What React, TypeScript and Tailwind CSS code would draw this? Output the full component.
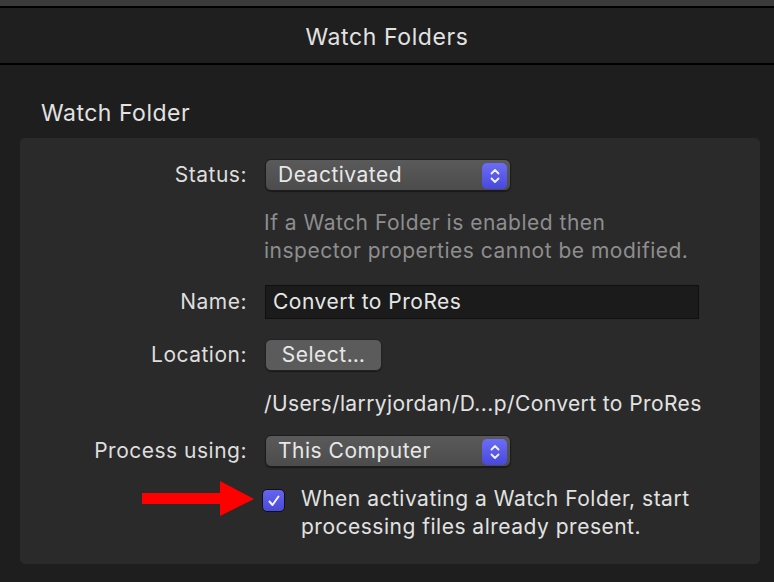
import React from "react";

const font = { fontFamily: "Inter, 'Noto Sans', sans-serif" };

function Stepper() {
  return (
    <div className="absolute right-[3px] top-[3px] w-[25px] h-[26px] rounded-[5px] bg-gradient-to-b from-[#6c6cf5] to-[#4848dc] flex items-center justify-center">
      <svg width="12" height="18" viewBox="0 0 12 18" fill="none" stroke="#f2f2ff" strokeWidth="1.8" strokeLinecap="round" strokeLinejoin="round">
        <path d="M2.5 6.5 L6 3 L9.5 6.5" />
        <path d="M2.5 11.5 L6 15 L9.5 11.5" />
      </svg>
    </div>
  );
}

function Popup({ label }: { label: string }) {
  return (
    <div className="relative w-[246px] h-[32px] rounded-[6px] bg-gradient-to-b from-[#5a5a5a] to-[#4c4c4c] border border-[#1c1c1c] flex items-center pl-[12px] text-[21px] tracking-[0.5px] text-[#e8e8e8] shadow-[0_1px_1px_rgba(0,0,0,0.4)]">
      {label}
      <Stepper />
    </div>
  );
}

function Row({ label, children, className = "" }: { label: string; children: React.ReactNode; className?: string }) {
  return (
    <div className={"flex items-center " + className}>
      <div className="w-[227px] text-right text-[21px] tracking-[0.5px] text-[#dedede] shrink-0">{label}</div>
      <div className="ml-[18px]">{children}</div>
    </div>
  );
}

export default function App() {
  return (
    <div className="w-[774px] h-[582px] bg-[#1e1e1e] flex flex-col overflow-hidden" style={font}>
      <div className="h-[6px] bg-[#3a3a3a]" />
      <div className="h-[2px] bg-black" />
      <div className="h-[55px] bg-[#1f1f1f] flex items-center justify-center pt-[3px] text-[23px] tracking-[0.6px] text-[#e2e2e2]">
        Watch Folders
      </div>
      <div className="h-[2px] bg-black" />
      <div className="pt-[33px] pl-[41px] h-[40px] box-content text-[23px] tracking-[0.5px] leading-[30px] text-[#e2e2e2]">
        Watch Folder
      </div>
      <div className="relative ml-[20px] w-[740px] h-[426px] rounded-[5px] bg-[#2a2a2a] pt-[21px] flex flex-col">
        <Row label="Status:">
          <Popup label="Deactivated" />
        </Row>
        <div className="ml-[244px] mt-[18px] text-[21px] tracking-[0.5px] leading-[28px] text-[#8e8e8e]">
          If a Watch Folder is enabled then
          <br />
          inspector properties cannot be modified.
        </div>
        <Row label="Name:" className="mt-[20px]">
          <div className="w-[434px] h-[34px] bg-[#1b1b1b] border border-[#101010] flex items-center pl-[7px] text-[21px] tracking-[0.5px] text-[#e6e6e6]">
            Convert to ProRes
          </div>
        </Row>
        <Row label="Location:" className="mt-[20px]">
          <div className="w-[117px] h-[32px] rounded-[6px] bg-[#5b5b5b] border border-[#222] flex items-center justify-center text-[21px] tracking-[0.5px] text-[#e8e8e8] shadow-[0_1px_1px_rgba(0,0,0,0.4)]">
            Select…
          </div>
        </Row>
        <div className="ml-[244px] mt-[19px] text-[21px] tracking-[0.4px] leading-[28px] text-[#e2e2e2] whitespace-nowrap">
          /Users/larryjordan/D...p/Convert to ProRes
        </div>
        <Row label="Process using:" className="mt-[17px]">
          <Popup label="This Computer" />
        </Row>
        <div className="flex items-start mt-[18px] ml-[242px]">
          <div className="mt-[4px] w-[23px] h-[23px] rounded-[5px] bg-gradient-to-b from-[#6464f0] to-[#4a4ad8] border border-[#111] flex items-center justify-center shrink-0">
            <svg width="14" height="14" viewBox="0 0 14 14" fill="none" stroke="#f4f4ff" strokeWidth="2" strokeLinecap="round" strokeLinejoin="round">
              <path d="M2.5 7.5 L5.5 11 L11.5 2.5" />
            </svg>
          </div>
          <div className="ml-[16px] text-[21px] tracking-[0.5px] leading-[28px] text-[#e2e2e2] whitespace-nowrap">
            When activating a Watch Folder, start
            <br />
            processing files already present.
          </div>
        </div>
        <svg className="absolute left-[122px] top-[343px]" width="112" height="36" viewBox="0 0 112 36">
          <polygon points="0,12 78,12 78,0 112,18 78,35 78,23 0,23" fill="#ff0000" />
        </svg>
      </div>
    </div>
  );
}
